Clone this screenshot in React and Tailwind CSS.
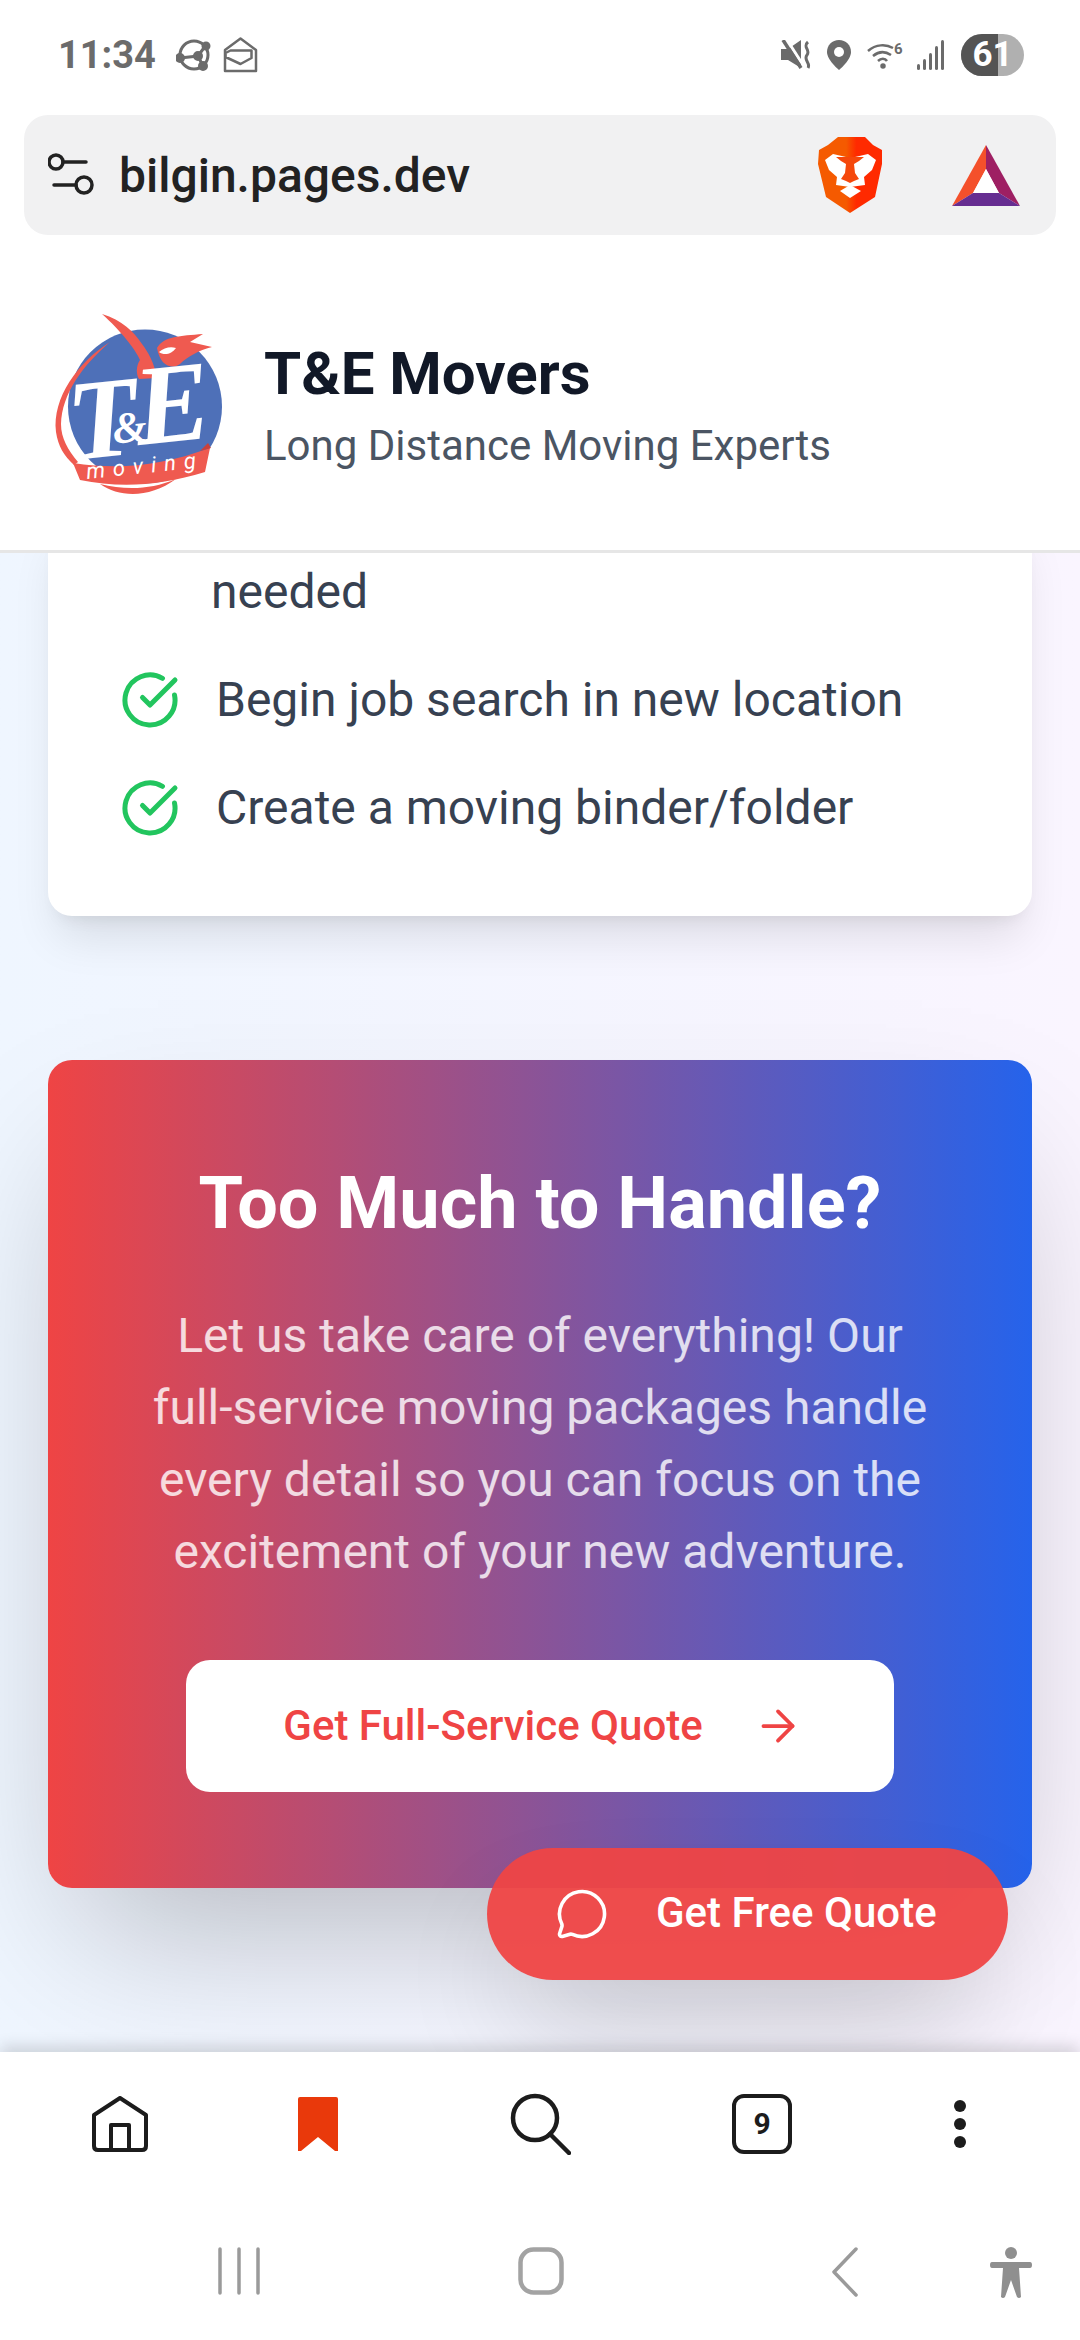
import React from "react";
import { ArrowRight, CircleCheckBig, MessageCircle } from "lucide-react";

const checklist = ["Begin job search in new location", "Create a moving binder/folder"];

function StatusBar() {
  return (
    <div className="h-[115px] pb-[6px] flex items-center justify-between pl-[58px] pr-[56px] text-[#6b6b6b]">
      <div className="flex items-center">
        <span className="text-[38px] font-bold leading-none mr-[20px]">11:34</span>
        <svg width="36" height="34" viewBox="0 0 36 34" fill="none" stroke="#6b6b6b" strokeWidth="3" className="mr-[11px]">
          <circle cx="18" cy="17" r="14" />
          <path d="M4 20 L22 18 L30 7 M22 18 L27 28" />
          <circle cx="4" cy="20" r="3.5" fill="#6b6b6b" />
          <circle cx="22" cy="18" r="3.5" fill="#6b6b6b" />
          <circle cx="30" cy="8" r="3" fill="#6b6b6b" />
          <circle cx="27" cy="28" r="3.5" fill="#6b6b6b" />
        </svg>
        <svg width="35" height="36" viewBox="0 0 34 36" fill="none" stroke="#6b6b6b" strokeWidth="2.5" strokeLinejoin="round">
          <path d="M1.5 34 V13 L17 1.5 L32.5 13 V34 Z" />
          <path d="M2 16 L7 13.5 H28 V21 L17 27 L2 20 Z" />
        </svg>
      </div>
      <div className="flex items-center">
        <svg width="30" height="30" viewBox="0 0 30 30" className="mr-[16px]">
          <path d="M0 9 H7 L20 0 V28 L7 20 H0 Z" fill="#6b6b6b" />
          <path d="M6 0 L24 28" stroke="#fff" strokeWidth="3" />
          <path d="M2 0 L20 28" stroke="#6b6b6b" strokeWidth="3.5" />
          <path d="M27 2 C21 7 30 10 26 15 C22 20 30 23 27 28" fill="none" stroke="#6b6b6b" strokeWidth="3" />
        </svg>
        <svg width="24" height="30" viewBox="0 0 24 30" className="mr-[16px]">
          <path d="M12 0 C5 0 0 5 0 12 C0 20 12 30 12 30 C12 30 24 20 24 12 C24 5 19 0 12 0 Z" fill="#6b6b6b" />
          <circle cx="12" cy="12" r="5" fill="#fff" />
        </svg>
        <svg width="36" height="28" viewBox="0 0 36 28" fill="none" stroke="#6b6b6b" strokeWidth="2.5" className="mr-[14px]">
          <path d="M1 10 C9 3 19 3 26 7" />
          <path d="M6 15 C12 10 18 10 24 14" />
          <path d="M11 20 C14 17 18 17 20 20" />
          <circle cx="16" cy="25" r="1.5" fill="#6b6b6b" />
          <text x="27" y="13" fontSize="15" fontWeight="700" fill="#6b6b6b" stroke="none" fontFamily="Roboto, sans-serif">6</text>
        </svg>
        <svg width="28" height="30" viewBox="0 0 28 30" fill="#6b6b6b" className="mr-[16px]">
          <rect x="0" y="24" width="3" height="6" rx="1.5" />
          <rect x="6" y="19" width="3" height="11" rx="1.5" />
          <rect x="12" y="13" width="3" height="17" rx="1.5" />
          <rect x="18" y="6" width="3" height="24" rx="1.5" />
          <rect x="24" y="0" width="3" height="30" rx="1.5" />
        </svg>
        <div className="relative w-[63px] h-[42px] rounded-full overflow-hidden bg-[#b0b0b0] flex">
          <div className="w-[37px] h-full bg-[#545454]" />
          <span className="absolute inset-0 flex items-center justify-center text-white text-[35px] font-bold leading-none">61</span>
        </div>
      </div>
    </div>
  );
}

function BraveIcon() {
  return (
    <svg width="65" height="76" viewBox="0 0 65 76">
      <defs>
        <linearGradient id="braveG" x1="0" x2="1" y1="0" y2="0">
          <stop offset="0.44" stopColor="#f55a00" />
          <stop offset="0.6" stopColor="#ff2a00" />
        </linearGradient>
      </defs>
      <path d="M20 0 H47 L55 8 L64 13 L64 27 L57 60 L32 76 L8 60 L0 27 L1 13 L10 8 Z" fill="url(#braveG)" />
      <path d="M7 23 L15 17 L28 20 H37 L50 17 L58 23 L54 33 L46 40 L47 48 L32 50 L18 48 L19 40 L11 33 Z" fill="#fff" />
      <path d="M18 20 H46 L41 24 L36 27 L37 36 L41 42 L36 44 L32 46 L28 44 L23 42 L27 36 L28 27 L23 24 Z" fill="#f5480c" />
      <path d="M22 54 L32 48 L43 54 L32 61 Z" fill="#fff" />
    </svg>
  );
}

function BatIcon() {
  return (
    <svg width="68" height="61" viewBox="0 0 68 61">
      <path d="M34 0 L0 61 L21 48 L34 24 Z" fill="#f4502b" />
      <path d="M34 0 L68 61 L47 48 L34 24 Z" fill="#9e1f63" />
      <path d="M0 61 H68 L47 48 H21 Z" fill="#662d91" />
      <path d="M34 24 L47 48 H21 Z" fill="#fff" />
    </svg>
  );
}

function UrlBar() {
  return (
    <div className="mx-[24px] h-[120px] rounded-[24px] bg-[#f1f1f2] flex items-center pl-[24px] pr-[36px]">
      <svg width="46" height="46" viewBox="0 0 46 46" fill="none" stroke="#222" strokeWidth="3.5" strokeLinecap="round" className="shrink-0">
        <circle cx="8" cy="10" r="7" />
        <path d="M15 10 H38" />
        <path d="M6 33 H28" />
        <circle cx="36" cy="33" r="8" />
      </svg>
      <span className="ml-[25px] pt-[2px] text-[48px] font-medium text-[#222] leading-none">bilgin.pages.dev</span>
      <div className="ml-auto flex items-center">
        <BraveIcon />
        <div className="ml-[69px]">
          <BatIcon />
        </div>
      </div>
    </div>
  );
}

function Logo() {
  return (
    <svg width="180" height="190" viewBox="22 20 180 190" className="shrink-0">
      <circle cx="115" cy="116.5" r="77" fill="#4e70b8" />
      <path d="M72 24 C92 30 104 42 112 54 C118 62 124 72 127 88 L109 89 C106 84 106 76 110 70 C106 60 90 40 72 24 Z" fill="#ef5a50" />
      <path d="M127 58 C134 46 150 46 173 44 L160 52 L182 57 C170 60 158 66 150 74 C142 80 130 76 127 58 Z" fill="#ef5a50" />
      <path d="M129 62 C134 58 140 56 146 58 C142 64 134 66 129 62 Z" fill="#fff" />
      <path d="M80 52 C48 72 22 108 26 142 C28 156 34 166 44 175 L48 172 C38 160 31 148 31 134 C32 104 52 76 80 52 Z" fill="#ef5a50" />
      <path d="M70 194 C90 208 120 208 146 189 C120 200 95 200 70 194 Z" fill="#ef5a50" />
      <text x="38" y="163" transform="rotate(-6 110 130)" fontStyle="italic" fontWeight="700" fill="#fff" fontFamily="'Liberation Serif', serif">
        <tspan fontSize="114">T</tspan>
        <tspan fontSize="44" dx="-26" dy="-12">&amp;</tspan>
        <tspan fontSize="114" dx="-10" dy="4">E</tspan>
      </text>
      <path d="M43 173 C90 180 130 176 180 158 L175 182 C130 196 90 198 50 190 Z" fill="#ef5a50" />
      <path d="M178 153 L181 158 L170 161 Z" fill="#c9403a" />
      <text x="57" y="189" fontSize="22" fontStyle="italic" fontWeight="400" letterSpacing="8" fill="#fff" transform="rotate(-5.8 57 189)" fontFamily="Roboto, sans-serif">moving</text>
    </svg>
  );
}

function SiteHeader() {
  return (
    <header className="relative z-20 h-[318px] bg-white border-b-[3px] border-[#e6e6e6] flex items-center pl-[52px] pt-[25px]">
      <Logo />
      <div className="ml-[32px] -mt-[3px]">
        <h1 className="text-[60px] font-bold text-[#111827] leading-[84px]">T&amp;E Movers</h1>
        <p className="text-[42px] text-[#4b5563] leading-[60px]">Long Distance Moving Experts</p>
      </div>
    </header>
  );
}

function ChecklistCard() {
  return (
    <section className="-mt-[40px] bg-white rounded-[24px] pt-[43px] pb-[72px] px-[72px] shadow-[0_30px_45px_-9px_rgba(0,0,0,0.1),0_12px_18px_-12px_rgba(0,0,0,0.1)]">
      <p className="ml-[91px] text-[48px] leading-[72px] text-[#374151]">needed</p>
      <ul className="mt-[36px] flex flex-col gap-[36px]">
        {checklist.map((item) => (
          <li key={item} className="flex items-center gap-[36px]">
            <CircleCheckBig size={60} strokeWidth={2} className="text-[#22c55e] shrink-0" />
            <span className="text-[48px] leading-[72px] text-[#374151] whitespace-nowrap">{item}</span>
          </li>
        ))}
      </ul>
    </section>
  );
}

function QuoteCard() {
  return (
    <section className="mt-[144px] rounded-[24px] bg-linear-to-r/srgb from-[#ef4444] to-[#2563eb] pt-[96px] pb-[96px] px-[72px] text-center shadow-[0_75px_150px_-36px_rgba(0,0,0,0.25)]">
      <h2 className="text-[72px] font-bold text-white leading-[96px]">Too Much to Handle?</h2>
      <p className="mt-[48px] mx-[24px] text-[48px] leading-[72px] text-white/80">
        Let us take care of everything! Our full-service moving packages handle every detail so you can focus on the excitement of your new adventure.
      </p>
      <button className="mt-[72px] mx-auto w-[708px] h-[132px] rounded-[24px] bg-white flex items-center justify-center gap-[50px] pl-[6px] text-[#ef4444] text-[42px] font-medium">
        <span className="-mt-[2px]">Get Full-Service Quote</span>
        <ArrowRight size={50} strokeWidth={1.8} />
      </button>
    </section>
  );
}

function BrowserNav() {
  return (
    <div className="h-[144px] px-[21px] flex items-center text-[#1c1c1c]">
      <div className="w-[198px] flex justify-center">
        <svg width="56" height="56" viewBox="0 0 56 56" fill="none" stroke="#1c1c1c" strokeWidth="4" strokeLinejoin="round">
          <path d="M2 19 L28 2 L54 19 V50 Q54 54 50 54 H6 Q2 54 2 50 Z" />
          <path d="M19 54 V29 H37 V54" />
        </svg>
      </div>
      <div className="w-[198px] flex justify-center">
        <svg width="40" height="56" viewBox="0 0 40 56">
          <path d="M2 1 H38 Q40 1 40 3 V55 L37 55 L20 41 L3 55 L0 55 V3 Q0 1 2 1 Z" fill="#e9390b" />
        </svg>
      </div>
      <div className="w-[246px] flex justify-center">
        <svg width="62" height="62" viewBox="0 0 62 62" fill="none" stroke="#1c1c1c" strokeWidth="4.5" strokeLinecap="round">
          <circle cx="26" cy="25" r="22" />
          <path d="M41 41 L60 60" />
        </svg>
      </div>
      <div className="w-[198px] flex justify-center">
        <div className="w-[60px] h-[60px] rounded-[12px] border-[4px] border-[#1c1c1c] flex items-center justify-center text-[30px] font-bold leading-none">9</div>
      </div>
      <div className="w-[198px] flex flex-col items-center gap-[6px]">
        <span className="w-[12px] h-[12px] rounded-full bg-[#1c1c1c]" />
        <span className="w-[12px] h-[12px] rounded-full bg-[#1c1c1c]" />
        <span className="w-[12px] h-[12px] rounded-full bg-[#1c1c1c]" />
      </div>
    </div>
  );
}

function SystemNav() {
  return (
    <div className="h-[144px] flex items-start pt-[51px] pl-[218px]">
      <svg width="42" height="48" viewBox="0 0 42 48" fill="none" stroke="#9a9a9a" strokeWidth="3.5" strokeLinecap="round">
        <path d="M2 2 V46 M21 2 V46 M40 2 V46" />
      </svg>
      <svg width="46" height="48" viewBox="0 0 46 48" fill="none" stroke="#a3a3a3" strokeWidth="4.5" className="ml-[258px]">
        <rect x="2.5" y="2.5" width="41" height="43" rx="13" />
      </svg>
      <svg width="26" height="50" viewBox="0 0 26 50" fill="none" stroke="#9a9a9a" strokeWidth="3.5" strokeLinecap="round" strokeLinejoin="round" className="ml-[268px]">
        <path d="M24 2 L2 25 L24 48" />
      </svg>
      <svg width="42" height="52" viewBox="0 0 42 52" fill="#8f8f8f" className="ml-[132px]">
        <circle cx="21" cy="6" r="6" />
        <path d="M2 15 H40 Q42 15 42 18 Q42 21 40 21 H29 L31 50 Q29 52 27 50 L21 33 L15 50 Q13 52 11 50 L13 21 H2 Q0 21 0 18 Q0 15 2 15 Z" />
      </svg>
    </div>
  );
}

export default function App() {
  return (
    <div className="w-[1080px] h-[2340px] bg-white flex flex-col overflow-hidden font-['Roboto',sans-serif]">
      <StatusBar />
      <UrlBar />
      <SiteHeader />
      <main className="relative flex-1 min-h-0 overflow-hidden px-[48px] bg-linear-to-r from-[#eff6ff] to-[#faf5ff]">
        <ChecklistCard />
        <QuoteCard />
        <button className="absolute right-[72px] bottom-[72px] w-[521px] h-[132px] rounded-full bg-[#ef4444]/95 text-white text-[42px] font-medium flex items-center pl-[68px] gap-[47px] shadow-[0_60px_120px_-30px_rgba(0,0,0,0.22)]">
          <MessageCircle size={54} strokeWidth={1.6} />
          <span className="-mt-[3px]">Get Free Quote</span>
        </button>
      </main>
      <div className="relative z-20 h-[288px] bg-white shadow-[0_-6px_14px_rgba(0,0,0,0.14)]">
        <BrowserNav />
        <SystemNav />
      </div>
    </div>
  );
}
